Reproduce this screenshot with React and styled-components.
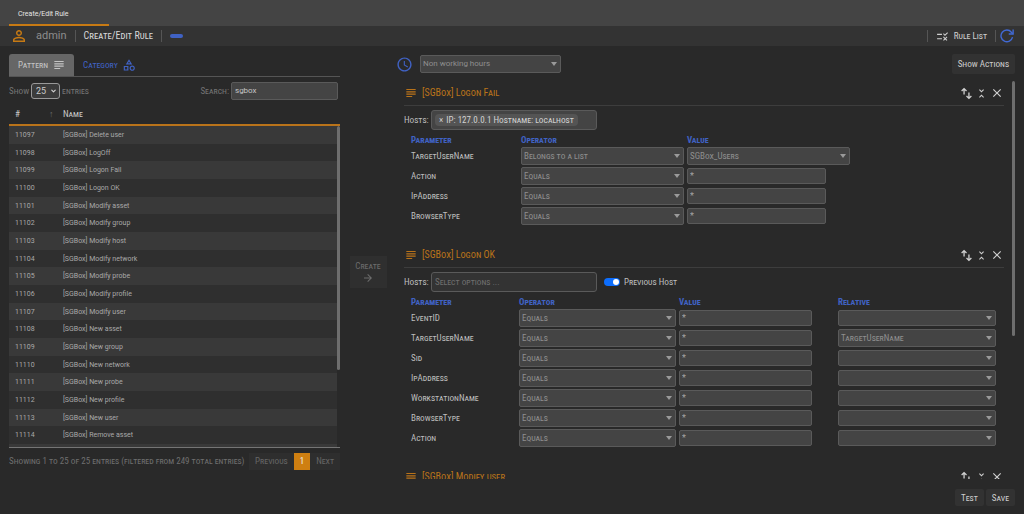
import { useState } from 'react';
import styled, { createGlobalStyle } from 'styled-components';
import {
    MdAccessTime,
    MdArrowForward,
    MdClose,
    MdOutlineCategory,
    MdPersonOutline,
    MdRule,
    MdSubject,
    MdUnfoldLess,
} from 'react-icons/md';
import { LuChevronDown } from 'react-icons/lu';

const GlobalStyle = createGlobalStyle`
  * {
    box-sizing: border-box;
  }
  body {
    margin: 0;
    background: #292929;
    color: #bdbdbd;
    font-family: "Roboto Condensed", "Liberation Sans Narrow", Roboto, sans-serif;
    font-size: 9px;
    line-height: 12px;
  }
  button, input, select {
    margin: 0;
    font: inherit;
    font-variant: inherit;
    color: inherit;
  }
  button {
    cursor: pointer;
  }
`;

const Page = styled.div`
  display: flex;
  flex-direction: column;
  height: 100vh;
  overflow: hidden;
  font-variant: small-caps;
`;

const TabStrip = styled.nav`
  display: flex;
  height: 26px;
  padding-left: 9px;
  background: #444;
`;

const WindowTab = styled.a`
  width: 100px;
  padding: 8px 9px 0;
  border-bottom: 2px solid #c77a14;
  color: #e4e4e4;
  font-family: Roboto, sans-serif;
  font-size: 7px;
  font-variant: normal;
  text-decoration: none;
`;

const Toolbar = styled.header`
  display: flex;
  align-items: center;
  height: 20px;
  padding: 0 10px;
  background: #333;
`;

const UserName = styled.span`
  margin-left: 8px;
  color: #8d8d8d;
  font-family: Roboto, sans-serif;
  font-size: 11px;
  font-variant: normal;
`;

const Separator = styled.span`
  width: 1px;
  height: 12px;
  margin: 0 ${(props) => (props.$tight ? '4px' : '8px')} 0 8px;
  background: #555;
`;

const PageTitle = styled.h1`
  margin: 0;
  color: #d8d8d8;
  font-size: 10px;
  font-weight: 400;
`;

const Pill = styled.span`
  width: 13px;
  height: 4px;
  border-radius: 2px;
  background: #4062c4;
`;

const ToolLink = styled.a`
  display: flex;
  align-items: center;
  gap: 5px;
  color: #cfcfcf;
  text-decoration: none;
`;

const ToolGroup = styled.div`
  display: flex;
  align-items: center;
  margin-left: auto;
`;

const IconButton = styled.button`
  display: flex;
  padding: 0;
  border: 0;
  background: none;
  color: ${(props) => props.$color || '#d0d0d0'};
`;

const Body = styled.main`
  flex: 1;
  display: grid;
  grid-template-columns: minmax(0, 331fr) 56px minmax(0, 619fr);
  grid-template-rows: minmax(0, 1fr);
  min-height: 0;
  padding: 8px 9px 8px;
`;

const LeftColumn = styled.section`
  display: flex;
  flex-direction: column;
  padding-bottom: 34px;
`;

const Tabs = styled.div`
  display: flex;
  height: 23px;
  border-bottom: 1px solid #555;
`;

const Tab = styled.button`
  display: flex;
  align-items: center;
  gap: 4px;
  padding: 0 8px 0 9px;
  border: 0;
  border-radius: 3px 3px 0 0;
  background: ${(props) => (props.$active ? '#666' : 'none')};
  color: ${(props) => (props.$active ? '#c4c4c4' : '#4062c4')};
`;

const TableTools = styled.div`
  display: flex;
  align-items: center;
  justify-content: space-between;
  height: 27px;
  padding-right: 2px;
  color: #747474;

  label {
    display: flex;
    align-items: center;
    gap: 2px;
  }
`;

const SelectBox = styled.span`
  position: relative;
  display: block;
  width: ${(props) => props.$width};
`;

const LengthSelect = styled.select`
  display: block;
  width: 100%;
  height: 16px;
  padding: 0 4px;
  border: 1px solid #999;
  border-radius: 3px;
  background: #3b3b3b;
  color: #c9c9c9;
  font-family: Roboto, sans-serif;
  appearance: none;
`;

const Mark = styled.span`
  position: absolute;
  top: 50%;
  right: ${(props) => props.$right};
  display: flex;
  color: ${(props) => props.$color};
  transform: translateY(-50%);
  pointer-events: none;
`;

const SearchInput = styled.input`
  width: 107px;
  height: 18px;
  padding: 0 3px;
  border: 1px solid #5a5a5a;
  border-radius: 2px;
  background: #444;
  color: #c4c4c4;
  font-family: Roboto, sans-serif;
  font-size: 8px;
  font-variant: normal;
`;

const ListHead = styled.div`
  display: flex;
  align-items: center;
  height: 20px;
  padding-left: 6px;
  color: #c9c9c9;

  span:first-child {
    width: 34px;
  }
  span:nth-child(2) {
    width: 14px;
    color: #6d6d6d;
  }
`;

const ListScroll = styled.div`
  flex: 1;
  display: flex;
  align-items: flex-start;
  min-height: 0;
  border-top: 2px solid #b9731a;
  border-bottom: 1px solid #757575;
  overflow: hidden;
`;

const RuleTable = styled.table`
  flex: 1;
  height: 336px;
  border-collapse: collapse;
  color: #a9a9a9;
  font-family: Roboto, sans-serif;
  font-size: 7px;
  font-variant: normal;
  line-height: 10px;

  tr {
    background: #2f2f2f;
  }
  tr:nth-child(odd) {
    background: #393939;
  }
  td {
    padding: 0;
  }
  td:first-child {
    width: 54px;
    padding-left: 6px;
  }
`;

const ScrollThumb = styled.div`
  width: 3px;
  height: ${(props) => props.$size};
  border-radius: 2px;
  background: #6e6e6e;
`;

const ListFooter = styled.div`
  display: flex;
  align-items: center;
  justify-content: space-between;
  height: 22px;
  margin-top: 2px;
  color: #6f6f6f;
  white-space: nowrap;
`;

const Pager = styled.div`
  display: flex;
`;

const PageButton = styled.button`
  height: 17px;
  padding: 0 6px;
  border: 0;
  background: ${(props) => (props.$current ? '#cf7f11' : '#2e2e2e')};
  color: ${(props) => (props.$current ? '#ededed' : '#666')};
`;

const MiddleColumn = styled.section`
  display: flex;
  align-items: center;
  justify-content: center;
  padding-bottom: 16px;
`;

const CreateButton = styled.button`
  display: flex;
  flex-direction: column;
  align-items: center;
  width: 37px;
  padding: 4px 0;
  border: 0;
  background: #2f2f2f;
  color: #6c6c6c;
`;

const RightColumn = styled.section`
  display: flex;
  flex-direction: column;
  min-width: 0;
`;

const ScheduleRow = styled.div`
  display: flex;
  align-items: center;
  height: 20px;
  color: #4062c4;
`;

const ScheduleField = styled.label`
  display: flex;
  align-items: center;
  gap: 7px;

  select {
    font-family: Roboto, sans-serif;
    font-size: 8px;
    font-variant: normal;
  }
`;

const ActionButton = styled.button`
  height: ${(props) => props.$height || '17px'};
  padding: 0 6px;
  border: 0;
  border-radius: 2px;
  background: #323232;
  color: #cdcdcd;

  ${ScheduleRow} & {
    margin-left: auto;
  }
`;

const RulesScroll = styled.div`
  flex: 1;
  display: flex;
  align-items: flex-start;
  min-height: 0;
  margin-top: 7px;
  padding-left: 8px;
  overflow: hidden;
`;

const Panels = styled.div`
  flex: 1;
  margin-right: 8px;
`;

const Panel = styled.article`
  padding-bottom: 17px;
`;

const PanelHead = styled.div`
  display: flex;
  align-items: center;
  height: 25px;
  border-bottom: 1px solid #3d3d3d;
  color: #b9731a;

  h2 {
    flex: 1;
    margin: 0 0 0 4px;
    font-size: 10px;
    font-weight: 400;
  }
`;

const PanelTools = styled.div`
  display: flex;
  align-items: center;
  gap: 2px;
`;

const HostsRow = styled.div`
  display: flex;
  align-items: center;
  height: 27px;

  > label {
    width: 27px;
  }
`;

const HostsBox = styled.div`
  display: flex;
  align-items: center;
  width: 166px;
  height: 20px;
  padding: 0 3px;
  border: 1px solid #5a5a5a;
  border-radius: 3px;
  background: ${(props) => (props.$filled ? '#444' : '#333')};

  input {
    flex: 1;
    min-width: 0;
    padding: 0;
    border: 0;
    outline: 0;
    background: none;
  }
  input::placeholder {
    color: #6f6f6f;
  }
`;

const HostTag = styled.span`
  display: flex;
  align-items: center;
  gap: 3px;
  padding: 0 4px;
  border-radius: 4px;
  background: #545454;
  color: #d2d2d2;
  white-space: nowrap;
`;

const SwitchLabel = styled.label`
  display: flex;
  align-items: center;
  gap: 4px;

  && {
    width: auto;
    margin-left: 7px;
  }
`;

const Switch = styled.input`
  display: flex;
  align-items: center;
  width: 16px;
  height: 8px;
  padding: 0 1px;
  border-radius: 4px;
  background: #555;
  appearance: none;

  &::before {
    content: '';
    width: 6px;
    height: 6px;
    border-radius: 50%;
    background: #fff;
  }
  &:checked {
    justify-content: flex-end;
    background: #0d6efd;
  }
`;

const ParamTable = styled.table`
  width: 100%;
  border-collapse: collapse;
  table-layout: fixed;

  th {
    height: 13px;
    padding: 0;
    color: #4062c4;
    font-weight: 700;
    text-align: left;
  }
  td {
    height: 20px;
    padding: 0;
  }
  th:first-child, td:first-child {
    padding-left: 7px;
  }
`;

const FieldSelect = styled.select`
  display: block;
  width: 100%;
  height: ${(props) => props.$height || '18px'};
  padding: 0 2px;
  border: 1px solid #5a5a5a;
  border-radius: 2px;
  background: #444;
  color: #8f8f8f;
  appearance: none;
`;

const FieldInput = styled.input`
  display: block;
  width: ${(props) => props.$width};
  height: 16px;
  padding: 0 2px;
  border: 1px solid #5a5a5a;
  border-radius: 2px;
  background: #444;
  color: #a5a5a5;
`;

const Footer = styled.footer`
  display: flex;
  justify-content: flex-end;
  gap: 2px;
  margin-top: 10px;
`;

const patterns = [
    'Delete user', 'LogOff', 'Logon Fail', 'Logon OK', 'Modify asset', 'Modify group',
    'Modify host', 'Modify network', 'Modify probe', 'Modify profile', 'Modify user',
    'New asset', 'New group', 'New network', 'New probe', 'New profile', 'New user',
    'Remove asset', 'Remove group',
].map((name, index) => ({ id: 11097 + index, name: `[SGBox] ${name}` }))

const rules = [
    {
        title: '[SGBox] Logon Fail',
        host: 'IP: 127.0.0.1 Hostname: localhost',
        columns: [117, 166, 163],
        inputWidth: '139px',
        params: [
            { name: 'TargetUserName', operator: 'Belongs to a list', list: 'SGBox_Users' },
            { name: 'Action', operator: 'Equals' },
            { name: 'IpAddress', operator: 'Equals' },
            { name: 'BrowserType', operator: 'Equals' },
        ]
    },
    {
        title: '[SGBox] Logon OK',
        previousHost: true,
        columns: [115, 160, 159, 158],
        inputWidth: '133px',
        relative: true,
        params: [
            { name: 'EventID', operator: 'Equals' },
            { name: 'TargetUserName', operator: 'Equals', relative: 'TargetUserName' },
            { name: 'Sid', operator: 'Equals' },
            { name: 'IpAddress', operator: 'Equals' },
            { name: 'WorkstationName', operator: 'Equals' },
            { name: 'BrowserType', operator: 'Equals' },
            { name: 'Action', operator: 'Equals' },
        ]
    },
    { title: '[SGBox] Modify user' },
]

const MoveIcon = () => (
    <svg width="13" height="13" viewBox="0 0 24 24" fill="none" stroke="currentColor" strokeWidth="2.4">
        <path d="M7.5 14V3M3 7.5 7.5 3 12 7.5M16.5 10v11M12 16.5l4.5 4.5 4.5-4.5" />
    </svg>
)

const ReloadIcon = () => (
    <svg width="14" height="14" viewBox="0 0 24 24" fill="none" stroke="currentColor" strokeWidth="2.4">
        <path d="M21.5 14A10 10 0 1 1 19.5 5.5L22 8" />
        <path d="M22.5 1v7.5H15" />
    </svg>
)

const Dropdown = ({ value, label, width, height }) => (
    <SelectBox $width={width}>
        <FieldSelect aria-label={label} defaultValue={value} $height={height}>
            <option>{value}</option>
        </FieldSelect>
        <Mark $right="4px" $color="#9a9a9a">
            <svg width="6" height="4" viewBox="0 0 6 4"><path d="M0 0h6L3 4z" fill="currentColor" /></svg>
        </Mark>
    </SelectBox>
)

const RulePanel = ({ rule, id }) => (
    <Panel>
        <PanelHead>
            <MdSubject size={14} />
            <h2>{rule.title}</h2>
            <PanelTools>
                <IconButton aria-label="Move"><MoveIcon /></IconButton>
                <IconButton aria-label="Collapse"><MdUnfoldLess size={13} /></IconButton>
                <IconButton aria-label="Remove"><MdClose size={14} /></IconButton>
            </PanelTools>
        </PanelHead>
        {rule.params &&
            <>
                <HostsRow>
                    <label htmlFor={`hosts-${id}`}>Hosts:</label>
                    <HostsBox $filled={rule.host}>
                        {rule.host && <HostTag><span>×</span>{rule.host}</HostTag>}
                        <input id={`hosts-${id}`} placeholder={rule.host ? '' : 'Select options ...'} />
                    </HostsBox>
                    {rule.previousHost &&
                        <SwitchLabel>
                            <Switch type="checkbox" role="switch" defaultChecked />
                            Previous Host
                        </SwitchLabel>}
                </HostsRow>
                <ParamTable>
                    <colgroup>
                        {rule.columns.map((width, index) => <col key={index} width={width} />)}
                        <col />
                    </colgroup>
                    <thead>
                        <tr>
                            <th>Parameter</th>
                            <th>Operator</th>
                            <th>Value</th>
                            {rule.relative && <th>Relative</th>}
                        </tr>
                    </thead>
                    <tbody>
                        {rule.params.map((param) =>
                            <tr key={param.name}>
                                <td>{param.name}</td>
                                <td>
                                    <Dropdown
                                        value={param.operator}
                                        label={`${param.name} operator`}
                                        width="calc(100% - 3px)"
                                    />
                                </td>
                                <td>
                                    {param.list ?
                                        <Dropdown value={param.list} label={`${param.name} value`} width="100%" />
                                        :
                                        <FieldInput
                                            aria-label={`${param.name} value`}
                                            defaultValue="*"
                                            $width={rule.inputWidth}
                                        />}
                                </td>
                                {rule.relative &&
                                    <td>
                                        <Dropdown
                                            value={param.relative || ''}
                                            label={`${param.name} relative`}
                                            width="100%"
                                            height={param.relative ? '18px' : '16px'}
                                        />
                                    </td>}
                            </tr>
                        )}
                    </tbody>
                </ParamTable>
            </>}
    </Panel>
)

const App = () => {
    const [search, setSearch] = useState('sgbox')
    const [tab, setTab] = useState('pattern')
    const visible = patterns.filter((item) => item.name.toLowerCase().includes(search.toLowerCase()))

    return (
        <>
            <GlobalStyle />
            <Page>
                <TabStrip>
                    <WindowTab href="#">Create/Edit Rule</WindowTab>
                </TabStrip>
                <Toolbar>
                    <IconButton $color="#c77a14" aria-label="User"><MdPersonOutline size={18} /></IconButton>
                    <UserName>admin</UserName>
                    <Separator />
                    <PageTitle>Create/Edit Rule</PageTitle>
                    <Separator />
                    <Pill />
                    <ToolGroup>
                        <Separator />
                        <ToolLink href="#"><MdRule size={13} />Rule List</ToolLink>
                        <Separator $tight />
                        <IconButton $color="#4169d4" aria-label="Reload"><ReloadIcon /></IconButton>
                    </ToolGroup>
                </Toolbar>
                <Body>
                    <LeftColumn>
                        <Tabs>
                            <Tab $active={tab == 'pattern'} onClick={() => setTab('pattern')}>
                                Pattern <MdSubject size={14} />
                            </Tab>
                            <Tab $active={tab == 'category'} onClick={() => setTab('category')}>
                                Category <MdOutlineCategory size={14} />
                            </Tab>
                        </Tabs>
                        <TableTools>
                            <label>
                                Show
                                <SelectBox $width="29px">
                                    <LengthSelect defaultValue="25"><option>25</option></LengthSelect>
                                    <Mark $right="3px" $color="#d0d0d0"><LuChevronDown size={7} strokeWidth={4} /></Mark>
                                </SelectBox>
                                entries
                            </label>
                            <label>
                                Search:
                                <SearchInput value={search} onChange={(e) => setSearch(e.target.value)} />
                            </label>
                        </TableTools>
                        <ListHead>
                            <span>#</span>
                            <span>↑</span>
                            <span>Name</span>
                        </ListHead>
                        <ListScroll>
                            <RuleTable>
                                <tbody>
                                    {visible.map((item) =>
                                        <tr key={item.id}>
                                            <td>{item.id}</td>
                                            <td>{item.name}</td>
                                        </tr>
                                    )}
                                </tbody>
                            </RuleTable>
                            <ScrollThumb $size="76%" />
                        </ListScroll>
                        <ListFooter>
                            <span>Showing 1 to 25 of 25 entries (filtered from 249 total entries)</span>
                            <Pager>
                                <PageButton>Previous</PageButton>
                                <PageButton $current>1</PageButton>
                                <PageButton>Next</PageButton>
                            </Pager>
                        </ListFooter>
                    </LeftColumn>
                    <MiddleColumn>
                        <CreateButton>
                            Create
                            <MdArrowForward size={12} />
                        </CreateButton>
                    </MiddleColumn>
                    <RightColumn>
                        <ScheduleRow>
                            <ScheduleField>
                                <MdAccessTime size={17} />
                                <Dropdown value="Non working hours" label="Schedule" width="141px" />
                            </ScheduleField>
                            <ActionButton $height="20px">Show Actions</ActionButton>
                        </ScheduleRow>
                        <RulesScroll>
                            <Panels>
                                {rules.map((rule, index) => <RulePanel key={index} id={index} rule={rule} />)}
                            </Panels>
                            <ScrollThumb $size="64%" />
                        </RulesScroll>
                        <Footer>
                            <ActionButton>Test</ActionButton>
                            <ActionButton>Save</ActionButton>
                        </Footer>
                    </RightColumn>
                </Body>
            </Page>
        </>
    );
};

export default App;
